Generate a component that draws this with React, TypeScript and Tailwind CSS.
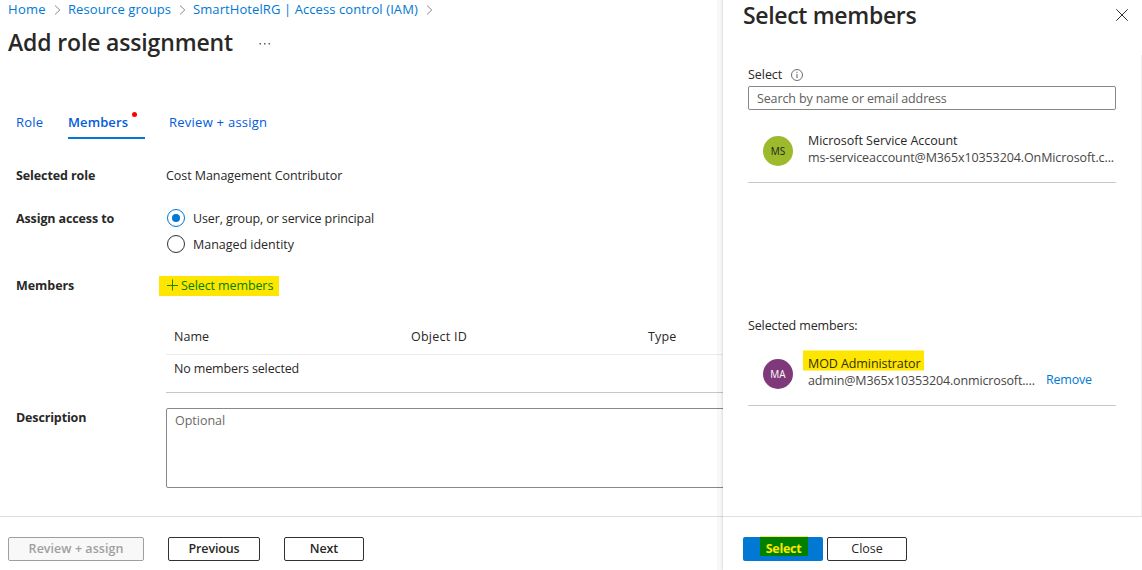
import type { ReactNode } from "react";

function Chevron() {
  return (
    <svg width="7" height="10" viewBox="0 0 7 10" className="shrink-0" fill="none" stroke="#8a8886" strokeWidth="1">
      <path d="M1 0.5 5.8 5 1 9.5" />
    </svg>
  );
}

function Row({ label, className, children }: { label: ReactNode; className: string; children?: ReactNode }) {
  return (
    <div className={`flex items-center ${className}`}>
      <div className="w-[150px] shrink-0 font-bold">{label}</div>
      {children}
    </div>
  );
}

function Radio({ checked }: { checked?: boolean }) {
  return (
    <span
      className={`mr-2 mb-[3px] ml-px flex size-[18px] shrink-0 items-center justify-center rounded-full border ${
        checked ? "border-[#0078d4]" : "border-[#323130]"
      }`}
    >
      {checked && <span className="size-2 rounded-full bg-[#0078d4]" />}
    </span>
  );
}

function MainPane() {
  return (
    <main className="flex h-full w-[723px] shrink-0 flex-col overflow-hidden">
      <nav className="flex h-5 shrink-0 items-center pl-2 text-[13px] text-[#0078d4]">
        <a className="w-[46px] tracking-[0.3px]">Home</a>
        <Chevron />
        <a className="ml-[7px] w-[111px] tracking-[0.08px]">Resource groups</a>
        <Chevron />
        <a className="ml-[7px] w-[233px] tracking-[0.09px]">SmartHotelRG | Access control (IAM)</a>
        <Chevron />
      </nav>

      <header className="flex h-[46px] shrink-0 items-center pl-2">
        <h1 className="w-[251px] pb-[2px] text-[23px] font-semibold tracking-[-0.15px]">Add role assignment</h1>
        <svg width="12" height="2" viewBox="0 0 12 2" fill="#605e5c" className="mt-[2px]">
          <rect x="0.5" width="1.5" height="1.5" />
          <rect x="5" width="1.5" height="1.5" />
          <rect x="9.5" width="1.5" height="1.5" />
        </svg>
      </header>

      <div className="mt-10 flex h-[33px] shrink-0 items-stretch pl-4 text-[13px] leading-[33px] text-[#015cda]">
        <a className="w-[52px] tracking-[0.2px]">Role</a>
        <a className="flex w-[77px] border-b-2 border-[#0078d4] font-semibold tracking-[0.1px]">
          Members
          <span className="mt-[6px] ml-1 size-[5px] rounded-full bg-[#ff0000]" />
        </a>
        <a className="ml-6 tracking-[0.25px]">Review + assign</a>
      </div>

      <div className="flex shrink-0 flex-col pl-4">
        <Row className="mt-[27px] h-[21px]" label={<span className="tracking-[-0.1px]">Selected role</span>}>
          <span className="tracking-[-0.06px]">Cost Management Contributor</span>
        </Row>
        <Row className="mt-[22px] h-[21px]" label={<span className="tracking-[-0.12px]">Assign access to</span>}>
          <Radio checked />
          <span className="tracking-[-0.12px]">User, group, or service principal</span>
        </Row>
        <div className="mt-[5px] ml-[150px] flex h-[21px] items-center">
          <Radio />
          <span className="tracking-[-0.02px]">Managed identity</span>
        </div>
        <Row className="mt-5 h-5" label={<span className="tracking-[-0.05px]">Members</span>}>
          <a className="-ml-[7px] flex h-5 w-[120px] items-center bg-[#ffe600] pl-[7px] text-[#008000]">
            <svg width="12" height="12" viewBox="0 0 12 12" stroke="#008000" strokeWidth="0.9" fill="none" className="mr-[3px] -mt-[3px]">
              <path d="M6.5 0.5v11M1 6.5h11" />
            </svg>
            <span className="tracking-[-0.1px]">Select members</span>
          </a>
        </Row>

        <div className="mt-[22px] ml-[150px] w-[573px] border-b border-[#c8c6c4]">
          <div className="flex h-[37px] items-center border-b border-[#edebe9] pt-[2px] pl-2 font-medium">
            <span className="w-[237px] tracking-[0.05px]">Name</span>
            <span className="w-[237px] tracking-[0.25px]">Object ID</span>
            <span className="tracking-[0.15px]">Type</span>
          </div>
          <div className="flex h-[37px] items-start pl-2 leading-[27px] tracking-[-0.13px]">No members selected</div>
        </div>

        <div className="mt-[15px] flex">
          <div className="w-[150px] shrink-0 font-bold leading-[19px] tracking-[-0.15px]">Description</div>
          <div className="h-20 w-[600px] shrink-0 rounded-[2px] border border-[#8a8886] pl-2 leading-[23px] tracking-[-0.02px] text-[#6b6967]">
            Optional
          </div>
        </div>
      </div>

      <footer className="mt-7 flex h-[54px] shrink-0 gap-6 border-t border-[#e1dfdd] pt-5 pl-2 font-semibold">
        <button className="flex h-6 w-[136px] justify-center rounded-[2px] border border-[#a19f9d] bg-[#f8f8f8] leading-[22px] tracking-[0.04px] text-[#a19f9d]">
          Review + assign
        </button>
        <button className="flex h-6 w-[92px] justify-center rounded-[2px] border border-[#323130] leading-[22px] tracking-[-0.15px]">
          Previous
        </button>
        <button className="flex h-6 w-20 justify-center rounded-[2px] border border-[#323130] leading-[22px] tracking-[-0.1px]">Next</button>
      </footer>
    </main>
  );
}

function MembersPanel() {
  return (
    <aside className="z-10 flex h-full w-[419px] shrink-0 flex-col bg-white shadow-[-1px_0_2px_rgba(0,40,30,0.13),-6px_0_0_rgba(0,50,40,0.03)]">
      <div className="flex h-[30px] shrink-0 items-center justify-between pr-[14px] pl-5">
        <h2 className="text-[23px] leading-[29px] font-semibold tracking-[-0.33px]">Select members</h2>
        <svg width="12" height="12" viewBox="0 0 12 12" fill="none" stroke="#323130">
          <path d="M0.3 0.3 11.7 11.7M11.7 0.3 0.3 11.7" />
        </svg>
      </div>

      <div className="mt-[25px] flex h-[461px] shrink-0 flex-col border-r border-[#f0f0f0] px-[25px]">
        <div className="mt-2 flex h-[23px] items-center">
          <span className="-mt-px w-[43px] leading-[19px] tracking-[-0.05px]">Select</span>
          <svg width="12" height="12" viewBox="0 0 12 12" fill="none" stroke="#605e5c" className="mt-px">
            <circle cx="6" cy="6" r="5.5" strokeWidth="0.9" />
            <path d="M6 5v4M6 2.8v1.1" />
          </svg>
        </div>
        <div className="h-6 rounded-[2px] border border-[#8a8886] pl-2 leading-[23px] tracking-[-0.13px] text-[#605e5c]">
          Search by name or email address
        </div>

        <div className="flex h-[73px] shrink-0 border-b border-[#c8c8c8] pt-[22px] pl-[15px]">
          <span className="mt-1 flex size-[30px] shrink-0 items-center justify-center rounded-full bg-[#9db92c] pt-px text-[10px] text-[#222]">
            MS
          </span>
          <div className="ml-[15px] leading-[17px]">
            <p className="tracking-[-0.03px]">Microsoft Service Account</p>
            <p className="whitespace-nowrap tracking-[-0.1px] text-[#484644]">ms-serviceaccount@M365x10353204.OnMicrosoft.c...</p>
          </div>
        </div>

        <div className="mt-[133px] h-5 shrink-0 leading-5 tracking-[-0.13px]">Selected members:</div>
        <div className="flex h-[70px] shrink-0 border-b border-[#c8c8c8] pt-[14px] pl-[15px]">
          <span className="mt-[9px] flex size-[30px] shrink-0 items-center justify-center rounded-full bg-[#7f397b] pt-px text-[10px] font-medium text-white">
            MA
          </span>
          <div className="ml-[10px] w-[238px] leading-[17px]">
            <p className="h-[21px] w-[121px] border-y border-[#fff27a] bg-[#ffe600] pt-1 pl-[5px] leading-[17px] tracking-[-0.08px] text-[#323100]">
              MOD Administrator
            </p>
            <p className="pl-[5px] whitespace-nowrap leading-[19px] tracking-[-0.14px] text-[#484644]">admin@M365x10353204.onmicrosoft....</p>
          </div>
          <a className="mt-[21px] ml-[5px] leading-[17px] tracking-[-0.2px] text-[#0078d4]">Remove</a>
        </div>
      </div>

      <footer className="flex h-[54px] shrink-0 gap-1 border-t border-[#e1e1e1] pt-5 pl-5">
        <button className="flex h-6 w-20 items-start rounded-[2px] bg-[#0078d4] pl-[17px] font-bold">
          <span className="-mt-px h-5 w-12 border-t border-[#ffe95c] bg-[#008000] pr-px leading-[24px] tracking-[-0.3px] text-[#ffe600]">
            Select
          </span>
        </button>
        <button className="flex h-6 w-20 justify-center rounded-[2px] border border-[#323130] font-medium leading-[22px] tracking-[-0.05px]">
          Close
        </button>
      </footer>
    </aside>
  );
}

export default function App() {
  return (
    <div className="flex h-[570px] w-[1142px] overflow-hidden bg-white font-['Open_Sans','Noto_Sans',sans-serif] text-[12.5px] text-[#292827]">
      <MainPane />
      <MembersPanel />
    </div>
  );
}
